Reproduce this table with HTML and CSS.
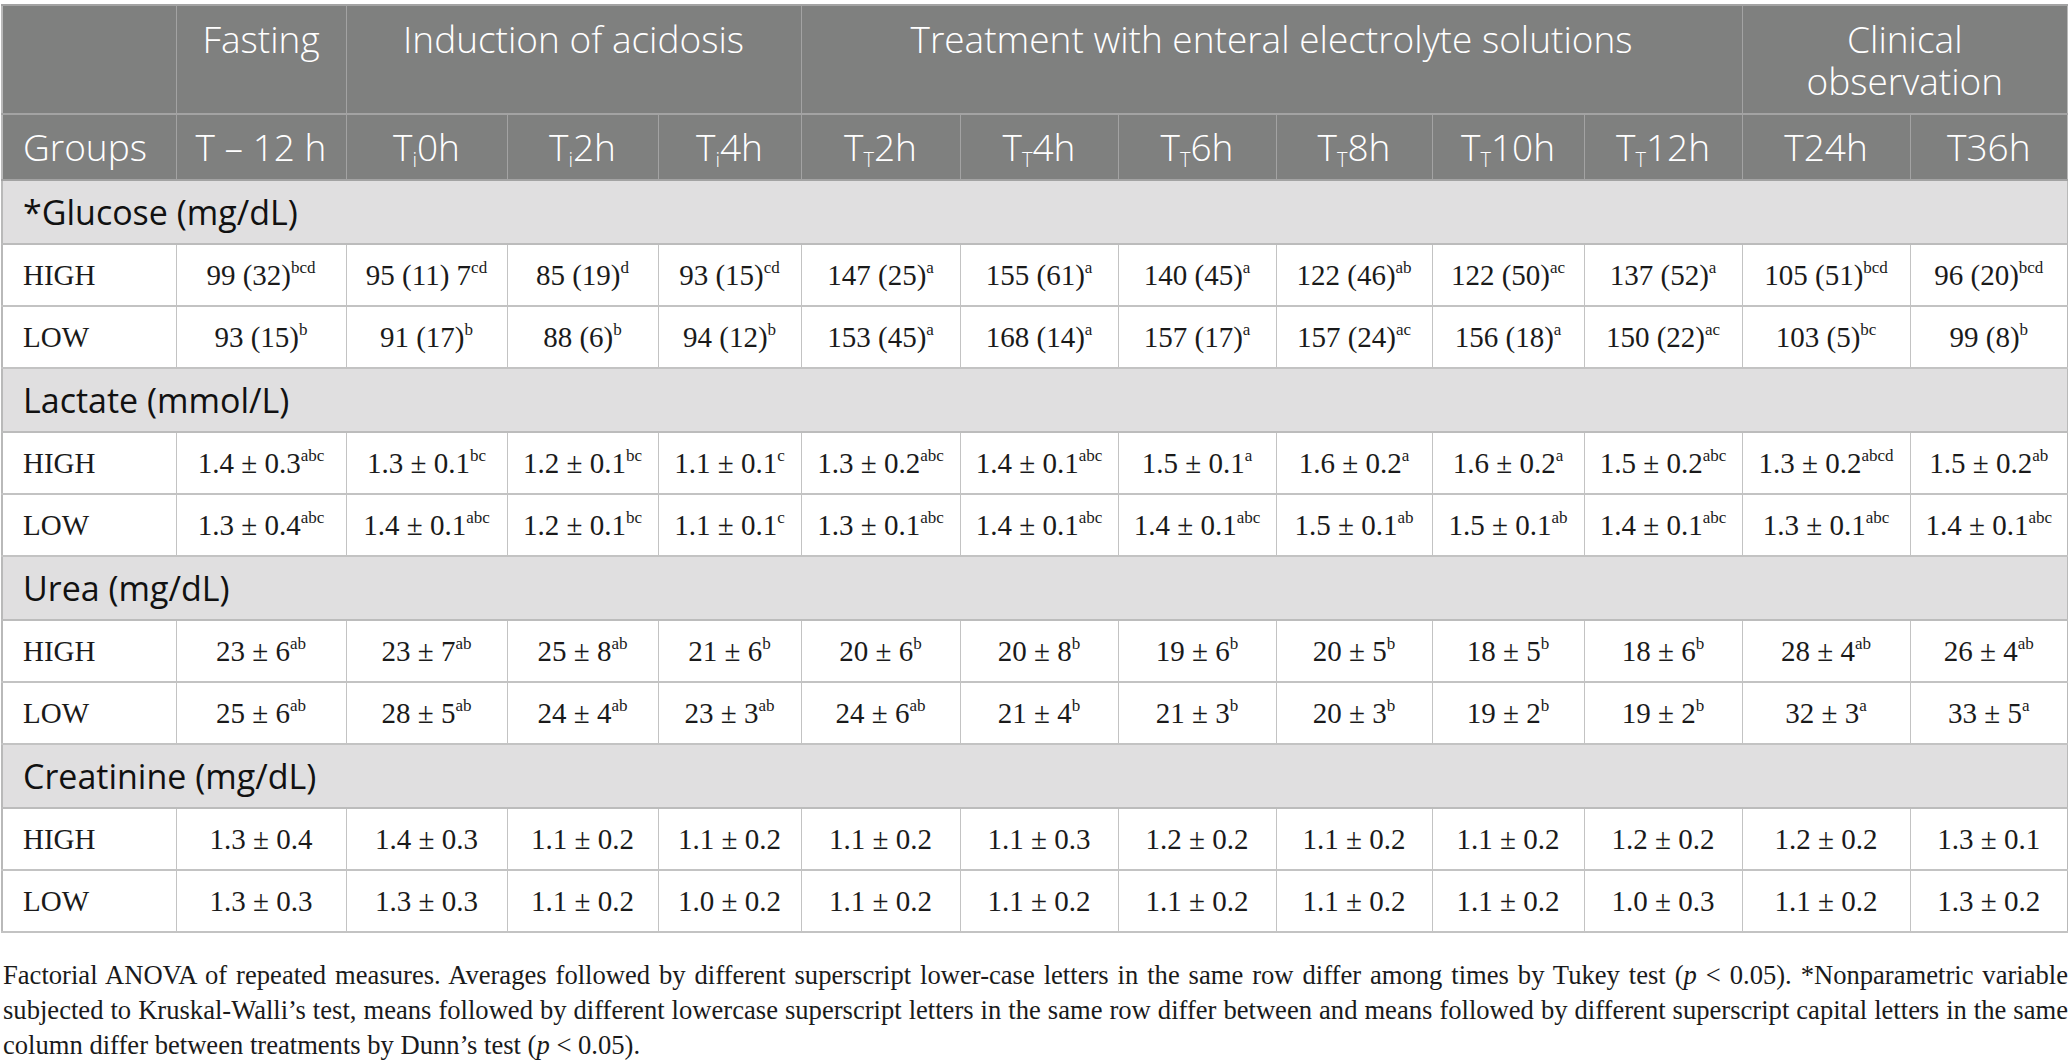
FILE: index.html
```html
<!DOCTYPE html>
<html>
<head>
<meta charset="utf-8">
<link rel="stylesheet" href="styles.css">
</head>
<body>
<div class="page">
<table class="tbl">
<colgroup>
<col style="width:174px"><col style="width:170px"><col style="width:161px"><col style="width:151px"><col style="width:143px"><col style="width:159px"><col style="width:158px"><col style="width:158px"><col style="width:156px"><col style="width:152px"><col style="width:158px"><col style="width:168px"><col style="width:158px">
</colgroup>
<thead>
<tr class="h1">
<th></th>
<th>Fasting</th>
<th colspan="3">Induction of acidosis</th>
<th colspan="6">Treatment with enteral electrolyte solutions</th>
<th colspan="2">Clinical<br>observation</th>
</tr>
<tr class="h2">
<th class="lft">Groups</th>
<th>T – 12 h</th>
<th>T<sub>i</sub>0h</th>
<th>T<sub>i</sub>2h</th>
<th>T<sub>i</sub>4h</th>
<th>T<sub>T</sub>2h</th>
<th>T<sub>T</sub>4h</th>
<th>T<sub>T</sub>6h</th>
<th>T<sub>T</sub>8h</th>
<th>T<sub>T</sub>10h</th>
<th>T<sub>T</sub>12h</th>
<th>T24h</th>
<th>T36h</th>
</tr>
</thead>
<tbody>
<tr class="sec"><td colspan="13">*Glucose (mg/dL)</td></tr>
<tr class="row"><td class="grp">HIGH</td><td>99 (32)<span class="sp">bcd</span></td><td>95 (11) 7<span class="sp">cd</span></td><td>85 (19)<span class="sp">d</span></td><td>93 (15)<span class="sp">cd</span></td><td>147 (25)<span class="sp">a</span></td><td>155 (61)<span class="sp">a</span></td><td>140 (45)<span class="sp">a</span></td><td>122 (46)<span class="sp">ab</span></td><td>122 (50)<span class="sp">ac</span></td><td>137 (52)<span class="sp">a</span></td><td>105 (51)<span class="sp">bcd</span></td><td>96 (20)<span class="sp">bcd</span></td></tr>
<tr class="row"><td class="grp">LOW</td><td>93 (15)<span class="sp">b</span></td><td>91 (17)<span class="sp">b</span></td><td>88 (6)<span class="sp">b</span></td><td>94 (12)<span class="sp">b</span></td><td>153 (45)<span class="sp">a</span></td><td>168 (14)<span class="sp">a</span></td><td>157 (17)<span class="sp">a</span></td><td>157 (24)<span class="sp">ac</span></td><td>156 (18)<span class="sp">a</span></td><td>150 (22)<span class="sp">ac</span></td><td>103 (5)<span class="sp">bc</span></td><td>99 (8)<span class="sp">b</span></td></tr>
<tr class="sec"><td colspan="13">Lactate (mmol/L)</td></tr>
<tr class="row"><td class="grp">HIGH</td><td>1.4 ± 0.3<span class="sp">abc</span></td><td>1.3 ± 0.1<span class="sp">bc</span></td><td>1.2 ± 0.1<span class="sp">bc</span></td><td>1.1 ± 0.1<span class="sp">c</span></td><td>1.3 ± 0.2<span class="sp">abc</span></td><td>1.4 ± 0.1<span class="sp">abc</span></td><td>1.5 ± 0.1<span class="sp">a</span></td><td>1.6 ± 0.2<span class="sp">a</span></td><td>1.6 ± 0.2<span class="sp">a</span></td><td>1.5 ± 0.2<span class="sp">abc</span></td><td>1.3 ± 0.2<span class="sp">abcd</span></td><td>1.5 ± 0.2<span class="sp">ab</span></td></tr>
<tr class="row"><td class="grp">LOW</td><td>1.3 ± 0.4<span class="sp">abc</span></td><td>1.4 ± 0.1<span class="sp">abc</span></td><td>1.2 ± 0.1<span class="sp">bc</span></td><td>1.1 ± 0.1<span class="sp">c</span></td><td>1.3 ± 0.1<span class="sp">abc</span></td><td>1.4 ± 0.1<span class="sp">abc</span></td><td>1.4 ± 0.1<span class="sp">abc</span></td><td>1.5 ± 0.1<span class="sp">ab</span></td><td>1.5 ± 0.1<span class="sp">ab</span></td><td>1.4 ± 0.1<span class="sp">abc</span></td><td>1.3 ± 0.1<span class="sp">abc</span></td><td>1.4 ± 0.1<span class="sp">abc</span></td></tr>
<tr class="sec"><td colspan="13">Urea (mg/dL)</td></tr>
<tr class="row"><td class="grp">HIGH</td><td>23 ± 6<span class="sp">ab</span></td><td>23 ± 7<span class="sp">ab</span></td><td>25 ± 8<span class="sp">ab</span></td><td>21 ± 6<span class="sp">b</span></td><td>20 ± 6<span class="sp">b</span></td><td>20 ± 8<span class="sp">b</span></td><td>19 ± 6<span class="sp">b</span></td><td>20 ± 5<span class="sp">b</span></td><td>18 ± 5<span class="sp">b</span></td><td>18 ± 6<span class="sp">b</span></td><td>28 ± 4<span class="sp">ab</span></td><td>26 ± 4<span class="sp">ab</span></td></tr>
<tr class="row"><td class="grp">LOW</td><td>25 ± 6<span class="sp">ab</span></td><td>28 ± 5<span class="sp">ab</span></td><td>24 ± 4<span class="sp">ab</span></td><td>23 ± 3<span class="sp">ab</span></td><td>24 ± 6<span class="sp">ab</span></td><td>21 ± 4<span class="sp">b</span></td><td>21 ± 3<span class="sp">b</span></td><td>20 ± 3<span class="sp">b</span></td><td>19 ± 2<span class="sp">b</span></td><td>19 ± 2<span class="sp">b</span></td><td>32 ± 3<span class="sp">a</span></td><td>33 ± 5<span class="sp">a</span></td></tr>
<tr class="sec"><td colspan="13">Creatinine (mg/dL)</td></tr>
<tr class="row"><td class="grp">HIGH</td><td>1.3 ± 0.4</td><td>1.4 ± 0.3</td><td>1.1 ± 0.2</td><td>1.1 ± 0.2</td><td>1.1 ± 0.2</td><td>1.1 ± 0.3</td><td>1.2 ± 0.2</td><td>1.1 ± 0.2</td><td>1.1 ± 0.2</td><td>1.2 ± 0.2</td><td>1.2 ± 0.2</td><td>1.3 ± 0.1</td></tr>
<tr class="row"><td class="grp">LOW</td><td>1.3 ± 0.3</td><td>1.3 ± 0.3</td><td>1.1 ± 0.2</td><td>1.0 ± 0.2</td><td>1.1 ± 0.2</td><td>1.1 ± 0.2</td><td>1.1 ± 0.2</td><td>1.1 ± 0.2</td><td>1.1 ± 0.2</td><td>1.0 ± 0.3</td><td>1.1 ± 0.2</td><td>1.3 ± 0.2</td></tr>
</tbody>
</table>
<p class="note">Factorial ANOVA of repeated measures. Averages followed by different superscript lower-case letters in the same row differ among times by Tukey test (<i>p</i> &lt; 0.05). *Nonparametric variable subjected to Kruskal-Walli’s test, means followed by different lowercase superscript letters in the same row differ between and means followed by different superscript capital letters in the same column differ between treatments by Dunn’s test (<i>p</i> &lt; 0.05).</p>
</div>
</body>
</html>
```
FILE: styles.css
```css
html, body {
  margin: 0;
  padding: 0;
  background: #ffffff;
}
.page {
  padding-top: 4px;
  width: 2068px;
}
.tbl {
  width: 2066px;
  margin-left: 1px;
  table-layout: fixed;
  border-collapse: collapse;
  border: 2px solid #b9b9b9;
}
.tbl th {
  background: #7f807f;
  color: #ffffff;
  font-family: "Open Sans", sans-serif;
  font-weight: 300;
  font-size: 37px;
  border: 1px solid #a3a3a3;
  border-top-width: 2px;
  border-bottom-width: 2px;
  text-align: center;
  padding: 0;
}
.h1 th {
  height: 95px;
  vertical-align: top;
  line-height: 42px;
  padding-top: 12px;
}
.h2 th {
  height: 64px;
  vertical-align: middle;
  line-height: 40px;
}
.h2 th.lft {
  text-align: left;
  padding-left: 20px;
}
.tbl sub {
  font-size: 20px;
  vertical-align: -6px;
  line-height: 0;
}
.sec td {
  background: #e0dfe0;
  color: #111111;
  font-family: "Open Sans", sans-serif;
  font-size: 34px;
  height: 62px;
  padding: 0 0 0 20px;
  border: 1px solid #bcbcbc;
  border-top-width: 2px;
  border-bottom-width: 2px;
  vertical-align: middle;
}
.row td {
  font-family: "Liberation Serif", "Times New Roman", serif;
  font-size: 29px;
  color: #1a1a1a;
  height: 60px;
  padding: 0;
  text-align: center;
  vertical-align: middle;
  border: 1px solid #c3c3c3;
  border-top-width: 2px;
  border-bottom-width: 2px;
  white-space: nowrap;
}
.row td.grp {
  text-align: left;
  padding-left: 20px;
}
.sp {
  font-size: 17px;
  vertical-align: 12px;
  line-height: 0;
}
.note {
  margin: 25px 0 0 3px;
  font-family: "Liberation Serif", "Times New Roman", serif;
  font-size: 26.6px;
  line-height: 35px;
  text-align: justify;
  color: #1a1a1a;
}
```
